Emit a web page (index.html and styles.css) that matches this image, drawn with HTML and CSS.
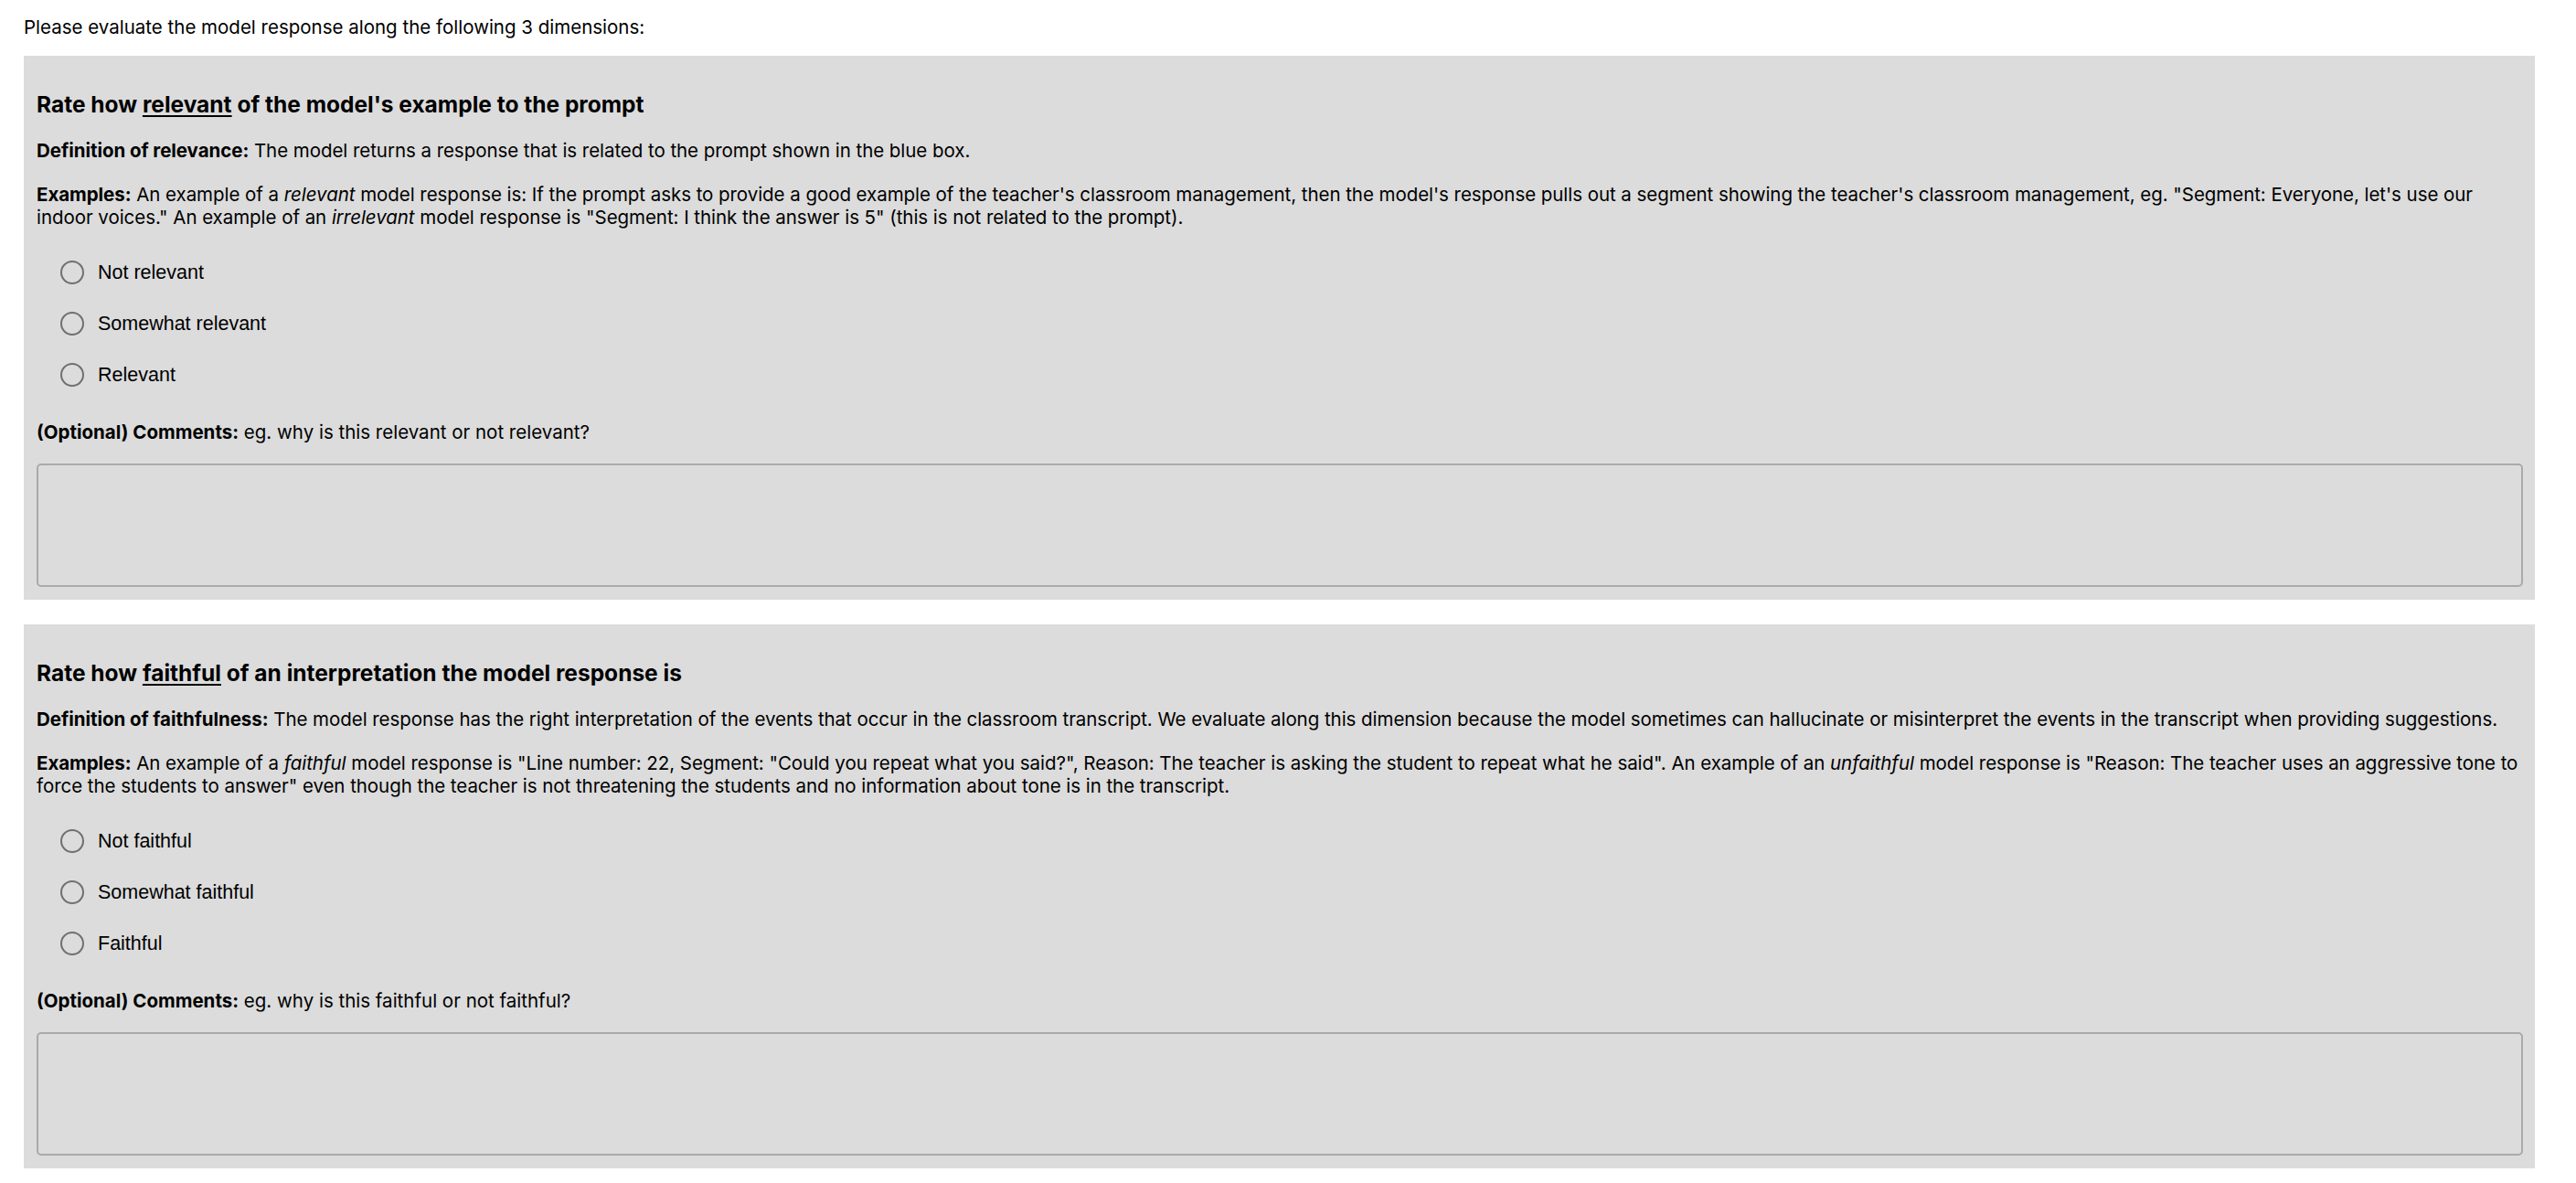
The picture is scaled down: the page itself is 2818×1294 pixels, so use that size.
FILE: index.html
```html
<!DOCTYPE html>
<html>
<head>
<meta charset="utf-8">
<link rel="stylesheet" href="styles.css">
</head>
<body>
<p class="intro">Please evaluate the model response along the following 3 dimensions:</p>

<section class="panel">
  <h3 class="title">Rate how <u>relevant</u> of the model's example to the prompt</h3>
  <p class="para"><b>Definition of relevance:</b> The model returns a response that is related to the prompt shown in the blue box.</p>
  <p class="para"><b>Examples:</b> An example of a <i>relevant</i> model response is: If the prompt asks to provide a good example of the teacher's classroom management, then the model's response pulls out a segment showing the teacher's classroom management, eg. "Segment: Everyone, let's use our indoor voices." An example of an <i>irrelevant</i> model response is "Segment: I think the answer is 5" (this is not related to the prompt).</p>
  <div class="options">
    <label class="option"><input type="radio" name="rel" class="radio"><span>Not relevant</span></label>
    <label class="option"><input type="radio" name="rel" class="radio"><span>Somewhat relevant</span></label>
    <label class="option"><input type="radio" name="rel" class="radio"><span>Relevant</span></label>
  </div>
  <p class="comment-label"><b>(Optional) Comments:</b> eg. why is this relevant or not relevant?</p>
  <textarea class="comment-box"></textarea>
</section>

<section class="panel">
  <h3 class="title">Rate how <u>faithful</u> of an interpretation the model response is</h3>
  <p class="para"><b>Definition of faithfulness:</b> The model response has the right interpretation of the events that occur in the classroom transcript. We evaluate along this dimension because the model sometimes can hallucinate or misinterpret the events in the transcript when providing suggestions.</p>
  <p class="para"><b>Examples:</b> An example of a <i>faithful</i> model response is "Line number: 22, Segment: "Could you repeat what you said?", Reason: The teacher is asking the student to repeat what he said". An example of an <i>unfaithful</i> model response is "Reason: The teacher uses an aggressive tone to force the students to answer" even though the teacher is not threatening the students and no information about tone is in the transcript.</p>
  <div class="options">
    <label class="option"><input type="radio" name="fai" class="radio"><span>Not faithful</span></label>
    <label class="option"><input type="radio" name="fai" class="radio"><span>Somewhat faithful</span></label>
    <label class="option"><input type="radio" name="fai" class="radio"><span>Faithful</span></label>
  </div>
  <p class="comment-label"><b>(Optional) Comments:</b> eg. why is this faithful or not faithful?</p>
  <textarea class="comment-box"></textarea>
</section>
</body>
</html>
```

FILE: styles.css
```css
html, body {
  background: #ffffff;
}
body {
  margin: 0;
  padding: 17px 45px 0 26px;
  font-family: Inter, "Liberation Sans", sans-serif;
  font-size: 20.5px;
  line-height: 25px;
  color: #000;
}
.intro {
  margin: 0 0 19px 0;
}
.panel {
  background: #dcdcdc;
  padding: 14px 13px 14px 14px;
  margin-bottom: 27px;
  display: flex;
  flex-direction: column;
}
.title {
  margin: 23px 0 0 0;
  font-size: 24.5px;
  line-height: 32px;
  font-weight: 700;
}
.title u {
  text-decoration-thickness: 2px;
  text-underline-offset: 3px;
}
.para {
  margin: 22px 0 0 0;
  letter-spacing: -0.05px;
}
.para + .para {
  margin-top: 23px;
}
.options {
  display: flex;
  flex-direction: column;
  gap: 30px;
  margin-top: 35px;
  padding-left: 26px;
}
.option {
  display: flex;
  align-items: center;
  gap: 15px;
  height: 26px;
  font-family: "Liberation Sans", Arial, sans-serif;
  font-size: 21.5px;
}
.radio {
  appearance: none;
  -webkit-appearance: none;
  margin: 0;
  width: 26px;
  height: 26px;
  border: 2px solid #707070;
  border-radius: 50%;
  background: transparent;
  box-sizing: border-box;
  flex: none;
}
.comment-label {
  margin: 37px 0 0 0;
}
.comment-box {
  margin-top: 22px;
  height: 135px;
  box-sizing: border-box;
  border: 2px solid #aaaaaa;
  border-radius: 5px;
  background: transparent;
  resize: none;
  width: 100%;
}
```
